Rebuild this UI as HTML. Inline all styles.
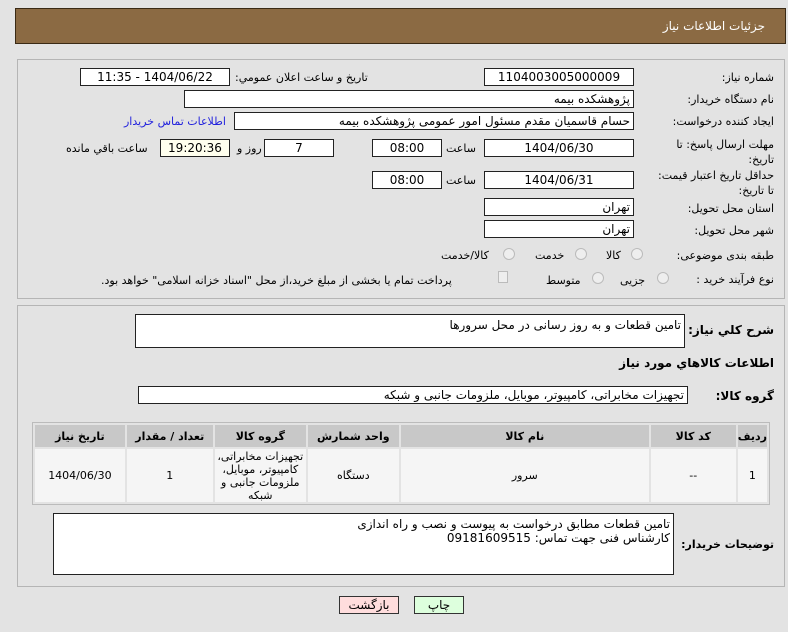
<!DOCTYPE html>
<html><head><meta charset="utf-8"><style>
*{box-sizing:border-box;margin:0;padding:0}
body{width:788px;height:632px;background:#e3e3e3;font-family:"DejaVu Sans","Liberation Sans",sans-serif;font-size:11px;color:#000;position:relative;overflow:hidden}
.a{position:absolute;white-space:nowrap}
.hd{left:15px;top:8px;width:771px;height:36px;background:#8b6a43;border:1px solid #3a2a15}
.hd span{position:absolute;right:20px;top:10px;color:#fff;font-size:12px}
.fs{border:1px solid #b5b5b5;background:#e3e3e3}
.in{position:absolute;background:#fff;border:1px solid #222;height:18px;line-height:16px;text-align:center;font-size:12px;direction:rtl}
.r{text-align:right;padding-right:3px}
.l{direction:rtl;text-align:right}
.b{font-weight:bold}
.rad{position:absolute;width:12px;height:12px;border-radius:50%;border:1px solid #bbb;background:#eee}
table{border-collapse:separate;border-spacing:2px;position:absolute;left:32px;top:422px;width:738px;border:1px solid #bbb;direction:rtl;font-size:11px}
th{background:#c8c8c8;height:22px;font-weight:bold}
td{background:#f5f5f5;height:53px;text-align:center;line-height:13px}
.btn{position:absolute;height:18px;border:1px solid #333;text-align:center;line-height:16px;font-size:12px}
</style></head><body>
<div class="a hd"><span>جزئیات اطلاعات نیاز</span></div>
<div class="a fs" style="left:17px;top:59px;width:768px;height:240px"></div>
<div class="a fs" style="left:17px;top:305px;width:768px;height:282px"></div>

<div class="a l" style="right:14px;top:71px">شماره نیاز:</div>
<div class="in" style="left:484px;top:68px;width:150px">1104003005000009</div>
<div class="a l" style="left:235px;top:71px">تاریخ و ساعت اعلان عمومي:</div>
<div class="in" style="left:80px;top:68px;width:150px">1404/06/22 - 11:35</div>

<div class="a l" style="right:14px;top:93px">نام دستگاه خریدار:</div>
<div class="in r" style="left:184px;top:90px;width:450px">پژوهشکده بیمه</div>

<div class="a l" style="right:14px;top:115px">ایجاد کننده درخواست:</div>
<div class="in r" style="left:234px;top:112px;width:400px">حسام قاسمیان مقدم مسئول امور عمومی پژوهشکده بیمه</div>
<div class="a" style="left:124px;top:115px;color:#2222dd">اطلاعات تماس خریدار</div>

<div class="a l" style="right:14px;top:137px;line-height:15px;text-align:right">مهلت ارسال پاسخ: تا<br>تاریخ:</div>
<div class="in" style="left:484px;top:139px;width:150px">1404/06/30</div>
<div class="a" style="left:446px;top:142px">ساعت</div>
<div class="in" style="left:372px;top:139px;width:70px">08:00</div>
<div class="in" style="left:264px;top:139px;width:70px">7</div>
<div class="a" style="left:237px;top:142px">روز و</div>
<div class="in" style="left:160px;top:139px;width:70px;background:#ffffee">19:20:36</div>
<div class="a" style="left:66px;top:142px">ساعت باقي مانده</div>

<div class="a l" style="right:14px;top:168px;line-height:15px">حداقل تاریخ اعتبار قیمت:<br>تا تاریخ:</div>
<div class="in" style="left:484px;top:171px;width:150px">1404/06/31</div>
<div class="a" style="left:446px;top:174px">ساعت</div>
<div class="in" style="left:372px;top:171px;width:70px">08:00</div>

<div class="a l" style="right:14px;top:202px">استان محل تحویل:</div>
<div class="in r" style="left:484px;top:198px;width:150px">تهران</div>
<div class="a l" style="right:14px;top:224px">شهر محل تحویل:</div>
<div class="in r" style="left:484px;top:220px;width:150px">تهران</div>

<div class="a l" style="right:14px;top:249px">طبقه بندی موضوعی:</div>
<div class="rad" style="left:631px;top:248px"></div><div class="a" style="left:606px;top:249px">کالا</div>
<div class="rad" style="left:575px;top:248px"></div><div class="a" style="left:535px;top:249px">خدمت</div>
<div class="rad" style="left:503px;top:248px"></div><div class="a" style="left:441px;top:249px">کالا/خدمت</div>

<div class="a l" style="right:14px;top:273px">نوع فرآیند خرید :</div>
<div class="rad" style="left:657px;top:272px"></div><div class="a" style="left:620px;top:274px">جزیی</div>
<div class="rad" style="left:592px;top:272px"></div><div class="a" style="left:546px;top:274px">متوسط</div>
<div class="a" style="left:498px;top:271px;width:10px;height:12px;border:1px solid #bbb;background:#eee"></div>
<div class="a l" style="left:101px;top:274px">پرداخت تمام یا بخشی از مبلغ خرید،از محل "اسناد خزانه اسلامی" خواهد بود.</div>

<div class="a l b" style="right:14px;top:323px;font-size:12px">شرح كلي نياز:</div>
<div class="in r" style="left:135px;top:314px;width:550px;height:34px;text-align:right;line-height:20px">تامین قطعات و به روز رسانی در محل سرورها</div>
<div class="a l b" style="right:14px;top:356px;font-size:12px">اطلاعات كالاهاي مورد نياز</div>
<div class="a l b" style="right:14px;top:389px;font-size:12px">گروه کالا:</div>
<div class="in r" style="left:138px;top:386px;width:550px">تجهیزات مخابراتی، کامپیوتر، موبایل، ملزومات جانبی و شبکه</div>

<table>
<tr><th style="width:26px">رديف</th><th style="width:85px">کد کالا</th><th style="width:248px">نام کالا</th><th style="width:91px">واحد شمارش</th><th style="width:91px">گروه کالا</th><th style="width:86px">تعداد / مقدار</th><th>تاريخ نياز</th></tr>
<tr><td>1</td><td>--</td><td>سرور</td><td>دستگاه</td><td>تجهیزات مخابراتی، کامپیوتر، موبایل، ملزومات جانبی و شبکه</td><td>1</td><td>1404/06/30</td></tr>
</table>

<div class="a l b" style="right:14px;top:538px;font-size:11px">توضیحات خریدار:</div>
<div class="in" style="left:53px;top:513px;width:621px;height:62px;text-align:right;line-height:14px;padding:3px 3px">تامین قطعات مطابق درخواست به پیوست و نصب و راه اندازی<br>کارشناس فنی جهت تماس: 09181609515</div>

<div class="btn" style="left:339px;top:596px;width:60px;background:#fdd">بازگشت</div>
<div class="btn" style="left:414px;top:596px;width:50px;background:#dfd">چاپ</div>
</body></html>
